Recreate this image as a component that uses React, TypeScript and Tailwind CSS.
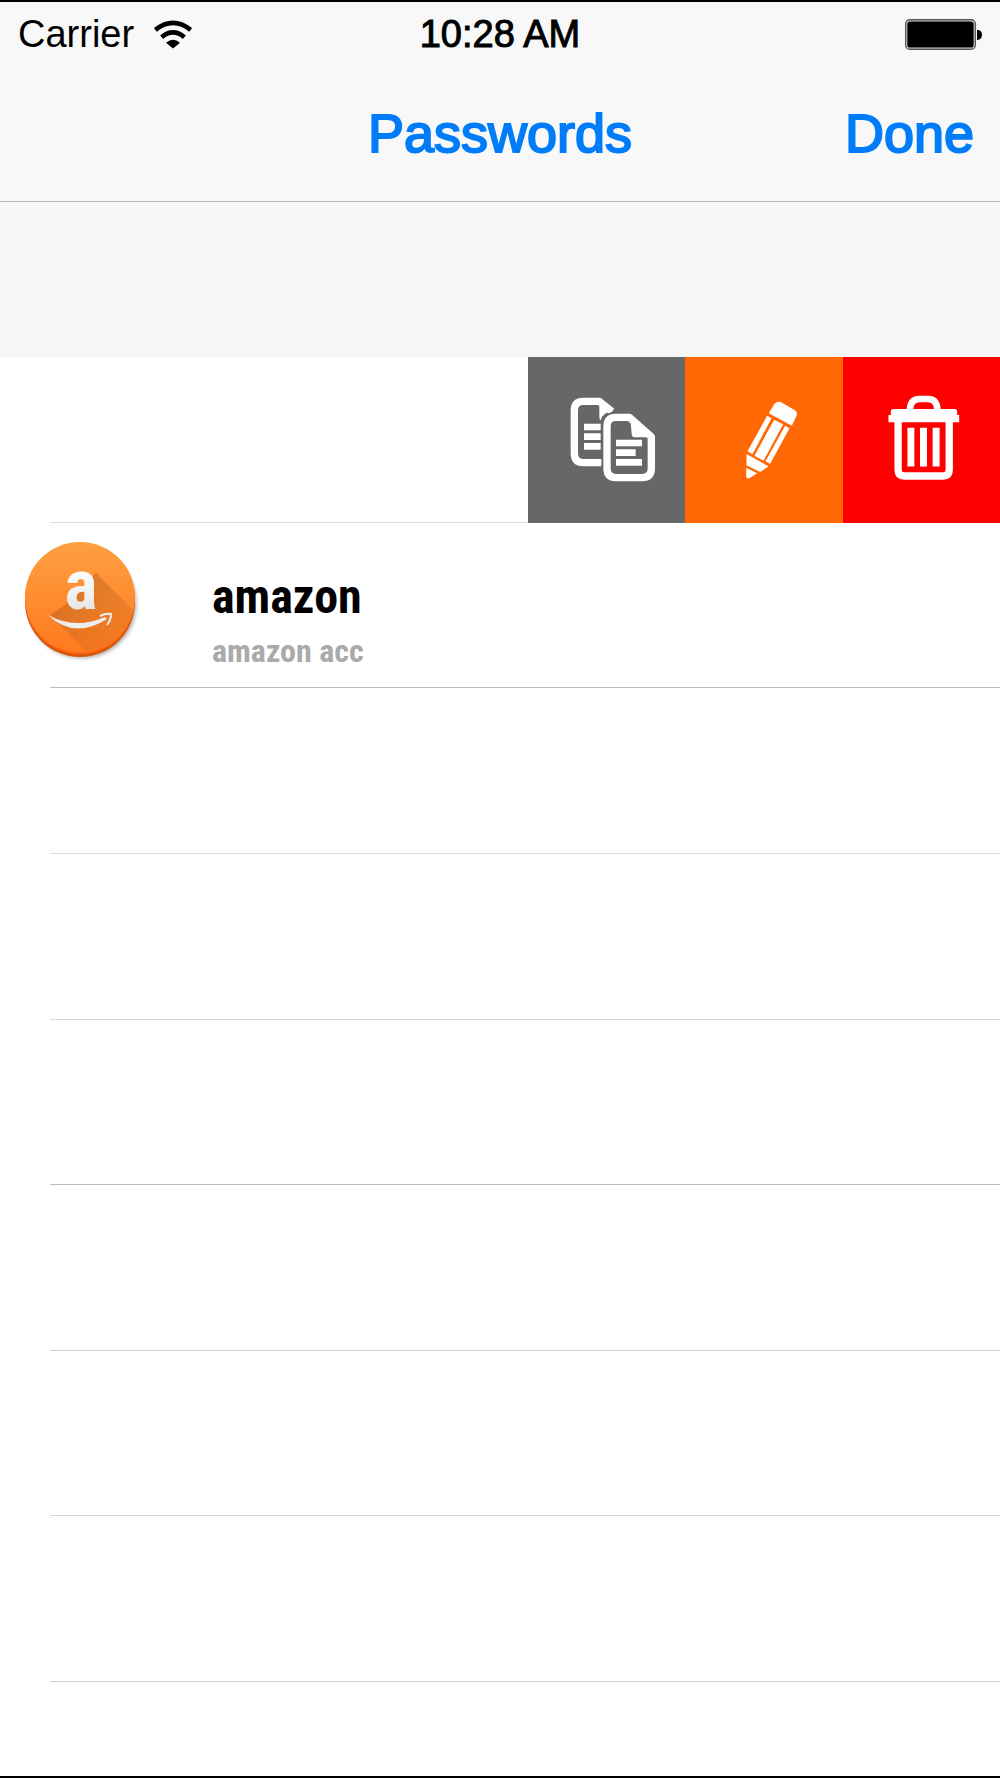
const emptyRows = [
  "after:bg-[#dededf]",
  "after:bg-[#d6d6d7]",
  "after:bg-[#bcbcbe]",
  "after:bg-[#d0d0d2]",
  "after:bg-[#d4d4d5]",
  "after:bg-[#d0d0d2]",
];

const rowLine =
  "relative after:absolute after:bottom-0 after:left-[50px] after:right-0 after:h-px";

function WifiIcon() {
  return (
    <svg viewBox="461 53 114 86" className="h-[29px] w-[38px]" aria-hidden>
      <g fill="none" stroke="#000">
        <path d="M465 82Q518 40 571 82" strokeWidth="14" />
        <path d="M484 104Q518 75 552 104" strokeWidth="14" />
      </g>
      <path d="M497 121Q518 103 539 121L518 138Z" />
    </svg>
  );
}

function BatteryIcon() {
  return (
    <svg viewBox="78 54 230 92" className="h-[31px] w-[77px]" aria-hidden>
      <rect x="80" y="56" width="208" height="88" rx="12" fill="#d8d8d8" stroke="#555" strokeWidth="4" />
      <rect x="85" y="61" width="198" height="78" rx="8" />
      <path d="M293 86Q308 88 308 101Q308 115 293 117Z" />
    </svg>
  );
}

function CopyIcon() {
  return (
    <svg viewBox="60 84 258 258" className="size-[86px]" aria-hidden>
      <g fill="none" stroke="#fff" strokeWidth="22">
        <path d="M156 281H100Q73 281 73 252V124Q73 97 100 97H148L186 128" />
      </g>
      <path d="M148 92L188 126Q158 130 152 154Q148 152 148 140Z" fill="#fff" />
      <path d="M102 164h50v20h-50zM102 193h50v20h-50zM102 222h50v20h-50z" fill="#fff" />
      <path
        d="M198 145H238L304 203V298Q304 326 276 326H198Q171 326 171 298V172Q171 145 198 145Z"
        fill="#676767"
        stroke="#676767"
        strokeWidth="34"
      />
      <path
        d="M198 145H238L304 203V298Q304 326 276 326H198Q171 326 171 298V172Q171 145 198 145Z"
        fill="#676767"
        stroke="#fff"
        strokeWidth="22"
        strokeLinejoin="round"
      />
      <path d="M240 140L308 205H256Q245 205 245 194Z" fill="#fff" />
      <path d="M198 212h78v20h-78zM198 241h59v20h-59zM198 270h78v20h-78z" fill="#fff" />
    </svg>
  );
}

function PencilIcon() {
  return (
    <svg viewBox="76 64 158 234" className="h-[78px] w-[53px]" fill="#fff" aria-hidden>
      <path d="M147 101L163 74Q171 62 184 68L225 92Q234 98 230 108L216 138Z" />
      <path d="M142 108L155 116L98 224L83 215Z" />
      <path d="M163 120L190 134L131 243L104 228Z" />
      <path d="M196 138L209 146L151 252L137 245Z" />
      <path d="M80 223L146 260L121 277L80 257Z" />
      <path d="M79 264L112 281L90 295Q79 299 79 289Z" />
    </svg>
  );
}

function TrashIcon() {
  return (
    <svg viewBox="54 48 216 256" className="h-[85px] w-[72px]" fill="#fff" aria-hidden>
      <path d="M120 96V88Q123 60 148 60H174Q199 60 202 88V96" fill="none" stroke="#fff" strokeWidth="20" />
      <path d="M70 90H254Q262 90 262 98V108H268V130H55V108H62V98Q62 90 70 90Z" />
      <path d="M84 125V274Q84 292 102 292H220Q238 292 238 274V125" fill="none" stroke="#fff" strokeWidth="22" />
      <path d="M112 147h21v116h-21zM150 147h21v116h-21zM188 147h21v116h-21z" />
    </svg>
  );
}

function AmazonLogo() {
  return (
    <svg viewBox="0 0 130 130" className="size-[130px]" aria-hidden>
      <defs>
        <linearGradient id="disc" x1="0" y1="0" x2="0" y2="1">
          <stop offset="0" stopColor="#ff9f43" />
          <stop offset="1" stopColor="#ff7a1f" />
        </linearGradient>
        <linearGradient id="shade" x1="0" y1="0" x2="1" y2="1">
          <stop offset="0" stopColor="#a85a18" stopOpacity="0.6" />
          <stop offset="1" stopColor="#c8641a" stopOpacity="0.1" />
        </linearGradient>
        <linearGradient id="letter" x1="0" y1="0" x2="0" y2="1">
          <stop offset="0.3" stopColor="#fff" />
          <stop offset="1" stopColor="#dcdcdc" />
        </linearGradient>
        <filter id="soft" x="-20%" y="-20%" width="140%" height="140%">
          <feGaussianBlur stdDeviation="2" />
        </filter>
        <clipPath id="face">
          <circle cx="60" cy="60" r="55" />
        </clipPath>
      </defs>
      <circle cx="62" cy="67" r="54" fill="#000" opacity="0.35" filter="url(#soft)" />
      <circle cx="60" cy="65" r="55" fill="#d9560c" />
      <circle cx="60" cy="62" r="55" fill="#ff6b14" />
      <circle cx="60" cy="60" r="55" fill="url(#disc)" />
      <path
        d="M76 36L116 76L96 108L66 114L30 78L45 68Z"
        fill="url(#shade)"
        clipPath="url(#face)"
      />
      <text
        x="61"
        y="72"
        textAnchor="middle"
        fontSize="70"
        fontWeight="700"
        fontFamily="Roboto Condensed, Roboto, sans-serif"
        fill="url(#letter)"
      >
        a
      </text>
      <path d="M28 78Q55 93 85 80L87 82Q54 103 28 78Z" fill="#eee" />
      <path d="M80 79Q86 76 91 77Q91 83 87 88" fill="none" stroke="#eee" strokeWidth="2" />
    </svg>
  );
}

export default function App() {
  return (
    <div className="flex min-h-screen flex-col border-y-2 border-black bg-white font-['Liberation_Sans',Arial,sans-serif]">
      <header className="border-b border-[#b8b8ba] bg-[#f8f8f8]">
        <div className="grid grid-cols-3 items-center px-[18px] pt-3 text-[38px] leading-[40px]">
          <div className="flex items-center gap-5">
            <span>Carrier</span>
            <WifiIcon />
          </div>
          <span className="text-center [-webkit-text-stroke:1px_black]">10:28 AM</span>
          <div className="flex justify-end">
            <BatteryIcon />
          </div>
        </div>

        <div className="grid grid-cols-[1fr_auto_1fr] items-center px-[26px] pt-[49px] pb-[38px] text-[54px] leading-[60px] text-[#007cf9] [-webkit-text-stroke:2px_#007cf9]">
          <h1 className="col-start-2">Passwords</h1>
          <button type="button" className="justify-self-end">
            Done
          </button>
        </div>
      </header>

      <div className="h-[155px] bg-[#f6f6f6]" />

      <ul className="grid flex-1 grid-rows-[repeat(8,minmax(165px,1fr))_94px]">
        <li className={`flex justify-end after:bg-[#dededf] ${rowLine}`}>
          {/* Swipe actions */}
          <div className="z-10 grid w-[47.2%] grid-cols-3">
            <button type="button" aria-label="Copy" className="flex items-center justify-center bg-[#676767] pl-3">
              <CopyIcon />
            </button>
            <button type="button" aria-label="Edit" className="flex items-center justify-center bg-[#ff6805] pl-4">
              <PencilIcon />
            </button>
            <button type="button" aria-label="Delete" className="flex items-center justify-center bg-[#ff0000] pb-1 pl-1.5">
              <TrashIcon />
            </button>
          </div>
        </li>

        <li className={`flex items-start gap-[62px] pl-5 after:bg-[#bcbcc0] ${rowLine}`}>
          <div className="pt-[14px]">
            <AmazonLogo />
          </div>
          <div className="pt-11 font-['Roboto_Condensed',Roboto,sans-serif] font-bold">
            <h2 className="text-[48px] leading-[60px]">amazon</h2>
            <p className="mt-1 text-[32px] leading-[40px] text-[#aaaaaa]">amazon acc</p>
          </div>
        </li>

        {emptyRows.map((line, i) => (
          <li key={i} className={`${rowLine} ${line}`} />
        ))}
      </ul>
    </div>
  );
}
